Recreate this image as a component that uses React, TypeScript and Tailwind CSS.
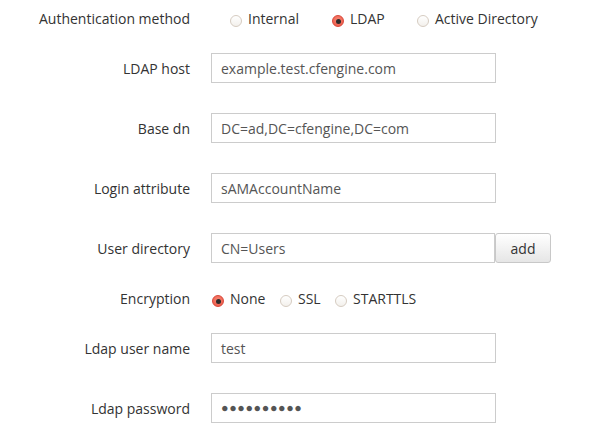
import React from "react";

const font = { fontFamily: '"Open Sans", "Liberation Sans", sans-serif' };

function Radio({ label, checked, w }: { label: string; checked?: boolean; w: string }) {
  return (
    <label className={`flex items-center gap-[6px] ${w}`}>
      {checked ? (
        <span className="relative top-[3px] flex h-[12px] w-[12px] items-center justify-center rounded-full border border-[#d9473a] bg-[radial-gradient(circle_at_50%_40%,#f98a78,#e9513f)]">
          <span className="h-[5px] w-[5px] rounded-full bg-[#2b2b2b]" />
        </span>
      ) : (
        <span className="relative top-[3px] h-[12px] w-[12px] rounded-full border border-[#d6ccc1] bg-gradient-to-b from-white to-[#f3f0ec]" />
      )}
      <span>{label}</span>
    </label>
  );
}

function Field({ label, value, mb }: { label: string; value: string; mb: string }) {
  return (
    <div className={`flex items-center ${mb}`}>
      <div className="w-[190px] shrink-0 text-right">{label}</div>
      <div className="ml-[21px] flex h-[30px] w-[285px] items-center border border-[#cccccc] bg-white pl-[9px] text-[#555555]">
        {value}
      </div>
    </div>
  );
}

export default function App() {
  return (
    <div className="h-[434px] w-[595px] bg-white pt-[3px] text-[14px] text-[#333333]" style={font}>
      <div className="mb-[20px] flex h-[30px] items-center">
        <div className="w-[190px] shrink-0 text-right">Authentication method</div>
        <div className="ml-[40px] flex items-center">
          <Radio label="Internal" w="w-[102px]" />
          <Radio label="LDAP" checked w="w-[85px]" />
          <Radio label="Active Directory" w="w-auto" />
        </div>
      </div>

      <Field label="LDAP host" value="example.test.cfengine.com" mb="mb-[30px]" />
      <Field label="Base dn" value="DC=ad,DC=cfengine,DC=com" mb="mb-[30px]" />
      <Field label="Login attribute" value="sAMAccountName" mb="mb-[30px]" />

      <div className="mb-[20px] flex items-center">
        <div className="w-[190px] shrink-0 text-right">User directory</div>
        <div className="ml-[21px] flex h-[30px] w-[284px] items-center border border-[#cccccc] bg-white pl-[9px] text-[#555555]">
          CN=Users
        </div>
        <button className="flex h-[30px] w-[56px] items-center justify-center rounded-[3px] border border-[#c8c8c8] bg-gradient-to-b from-white to-[#e6e6e6] text-[#333333]">
          add
        </button>
      </div>

      <div className="mb-[20px] flex h-[30px] items-center">
        <div className="w-[190px] shrink-0 text-right">Encryption</div>
        <div className="ml-[22px] flex items-center">
          <Radio label="None" checked w="w-[68px]" />
          <Radio label="SSL" w="w-[55px]" />
          <Radio label="STARTTLS" w="w-auto" />
        </div>
      </div>

      <Field label="Ldap user name" value="test" mb="mb-[30px]" />

      <div className="flex items-center">
        <div className="w-[190px] shrink-0 text-right">Ldap password</div>
        <div className="ml-[21px] flex h-[30px] w-[285px] items-center border border-[#cccccc] bg-white pl-[9px] text-[12.5px] tracking-[0.6px] text-[#555555]">
          ●●●●●●●●●●
        </div>
      </div>
    </div>
  );
}
